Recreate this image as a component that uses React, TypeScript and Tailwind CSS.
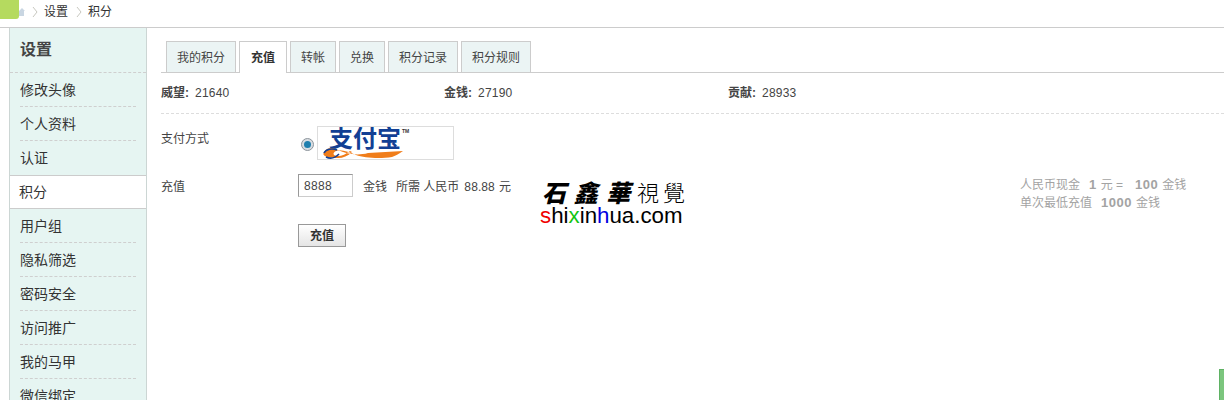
const cjk = "font-['Liberation_Sans','Noto_Sans_CJK_SC',sans-serif]";

const menuTop = ['修改头像', '个人资料', '认证'];
const menuBottom = ['用户组', '隐私筛选', '密码安全', '访问推广', '我的马甲', '微信绑定'];
const tabs = ['我的积分', '充值', '转帐', '兑换', '积分记录', '积分规则'];

function MenuItem({ label, last }: { label: string; last?: boolean }) {
  return (
    <div className="px-[10px]">
      <div className={`h-[34px] leading-[34px] text-[14px] text-[#333] ${last ? '' : 'border-b border-dashed border-[#cfcfcf]'}`}>
        {label}
      </div>
    </div>
  );
}

function Chevron({ left }: { left: string }) {
  return (
    <svg width="6" height="12" viewBox="0 0 6 12" fill="none" className={`${left} mr-[6px]`}>
      <path d="M1 1l4 5-4 5" stroke="#c8c8c0" strokeWidth="1" />
    </svg>
  );
}

function Credit({ label, value, width }: { label: string; value: string; width?: string }) {
  return (
    <div className={width}>
      <b>{label}:</b>
      <span className="ml-[6px] tracking-[0.2px]">{value}</span>
    </div>
  );
}

function Alipay() {
  return (
    <div className="relative w-[137px] h-[34px] border border-[#ddd] bg-white overflow-hidden">
      <span className="absolute left-[11px] top-[-2px] text-[24px] leading-[28px] font-bold text-[#123f94] whitespace-nowrap">
        支付宝
      </span>
      <span className="absolute left-[84px] top-[1px] text-[5px] leading-[6px] font-bold text-[#333]">TM</span>
      <svg width="137" height="34" viewBox="0 0 137 34" className="absolute left-0 top-0">
        <path d="M6 25c3-5 9-5 14-2 8 4 20 6 30 3l35-2c-4 3-8 5-11 6-12 2-28 1-36-2-7-3-15-6-20-4-4 2-3 5 2 5 4 0 8-2 12-5l2 1c-4 4-9 6-14 6-8 0-17-1-14-6z" fill="#f07d1a" />
        <path d="M6 26c2-4 8-5 13-3M8 30c4 2 9 1 13-3" stroke="#123f94" strokeWidth="1.6" fill="none" />
      </svg>
    </div>
  );
}

export default function App() {
  return (
    <div className={`relative h-[400px] w-[1224px] overflow-hidden bg-white text-[12px] text-[#444] ${cjk}`}>
      {/* breadcrumb */}
      <div className="flex items-center h-[28px] border-b border-[#ccc] pb-[4px]">
        <div className="w-[19px] h-[19px] -mb-px self-start bg-[#b5da5f] rounded-br-[3px]" />
        <svg width="6" height="10" viewBox="0 0 6 10" className="mt-px">
          <path d="M0 4l3-3 3 3H5v5H0z" fill="#c9d6e2" />
        </svg>
        <Chevron left="ml-[7px]" />
        <span className="text-[#333]">设置</span>
        <Chevron left="ml-[8px]" />
        <span className="text-[#333]">积分</span>
      </div>

      <div className="flex pl-[9px]">
        {/* sidebar */}
        <div className="w-[138px] h-[372px] shrink-0 bg-[#e6f5f2] border-l border-r border-[#ccd6d4] overflow-hidden">
          <div className="h-[45px] leading-[44px] px-[10px] border-b border-dashed border-[#cfcfcf] text-[16px] font-bold text-[#444]">
            设置
          </div>
          {menuTop.map((m, i) => (
            <MenuItem key={m} label={m} last={i === menuTop.length - 1} />
          ))}
          <div className="h-[34px] leading-[32px] pl-[9px] bg-white border-y border-[#ccc] text-[14px] text-[#333]">
            积分
          </div>
          {menuBottom.map(m => (
            <MenuItem key={m} label={m} />
          ))}
        </div>

        {/* main */}
        <div className="flex-1 pl-[14px]">
          <div className="flex items-end gap-[3px] h-[45px] pl-[5px] border-b border-[#ccc]">
            {tabs.map((t, i) => (
              <div
                key={t}
                className={
                  i === 1
                    ? 'h-[32px] -mb-px px-[11px] leading-[32px] bg-white border border-b-0 border-[#ccc] font-bold text-[#333]'
                    : 'h-[31px] px-[10px] leading-[32px] bg-[#ebf4f4] border border-b-0 border-[#ccc] text-[#444]'
                }
              >
                {t}
              </div>
            ))}
          </div>

          <div className="flex h-[41px] items-center border-b border-dashed border-[#ddd]">
            <Credit label="威望" value="21640" width="w-[283px]" />
            <Credit label="金钱" value="27190" width="w-[284px]" />
            <Credit label="贡献" value="28933" />
          </div>

          <div className="flex mt-[12px]">
            <div className="w-[140px] pt-[5px] leading-[16px]">支付方式</div>
            <div className="flex items-center">
              <span className="flex items-center justify-center w-[13px] h-[13px] mt-[3px] mr-[3px] rounded-full bg-[#d8dde2] border border-[#8d959c]">
                <span className="w-[7px] h-[7px] rounded-full bg-[#1f7fae]" />
              </span>
              <Alipay />
            </div>
          </div>

          <div className="flex mt-[14px] items-center h-[25px]">
            <div className="w-[137px] leading-[16px]">充值</div>
            <input
              readOnly
              value="8888"
              className="self-start w-[55px] h-[23px] px-[5px] border border-[#ccc] border-t-[#999] border-l-[#999] text-[12px] tracking-[0.3px] text-[#444] outline-none"
            />
            <span className="ml-[10px]">金钱</span>
            <span className="ml-[9px]">所需 人民币</span>
            <span className="ml-[5px] tracking-[0.1px]">88.88</span>
            <span className="ml-[4px]">元</span>
          </div>

          <button className="block mt-[25px] ml-[137px] w-[48px] h-[23px] border border-[#999] bg-gradient-to-b from-white to-[#e5e5e5] font-bold text-[#333] text-[12px]">
            充值
          </button>
        </div>
      </div>

      {/* exchange note */}
      <div className="absolute left-[1020px] top-[176px] leading-[18px] text-[#a3a3a3] whitespace-nowrap">
        <div className="flex">
          <span>人民币现金</span>
          <b className="ml-[9px] text-[13px] tracking-[0.5px]">1</b>
          <span className="ml-[4px]">元 =</span>
          <b className="ml-[12px] text-[13px] tracking-[0.5px]">100</b>
          <span className="ml-[4px]">金钱</span>
        </div>
        <div className="flex">
          <span>单次最低充值</span>
          <b className="ml-[9px] text-[13px] tracking-[0.5px]">1000</b>
          <span className="ml-[4px]">金钱</span>
        </div>
      </div>

      {/* watermark */}
      <div className="absolute left-[540px] top-[178px] w-[145px] bg-white">
        <div className="h-[27px] flex items-center gap-[1px] pl-[2px] text-black whitespace-nowrap font-['Noto_Sans_CJK_SC',serif]">
          <span className="text-[24px] leading-[27px] font-black w-[32px] italic">石</span>
          <span className="text-[24px] leading-[27px] font-black w-[33px] italic">鑫</span>
          <span className="text-[24px] leading-[27px] font-black w-[31px] italic">華</span>
          <span className="text-[22px] leading-[27px] font-['Noto_Sans_CJK_TC',serif] font-light w-[26px]">視</span>
          <span className="text-[22px] leading-[27px] font-['Noto_Sans_CJK_TC',serif] font-light">覺</span>
        </div>
        <div className="font-['Liberation_Sans',sans-serif] text-[22.3px] leading-[21px] text-black whitespace-nowrap">
          <span className="text-[#f00000]">s</span>hi<span className="text-[#12c412]">x</span>in<span className="text-[#0000e0]">h</span>ua.com
        </div>
      </div>

      {/* scroll-to-top tab */}
      <div className="absolute right-0 bottom-0 w-[5px] h-[31px] bg-[#7cc67e] border-t border-l border-[#5fb264]" />
    </div>
  );
}
